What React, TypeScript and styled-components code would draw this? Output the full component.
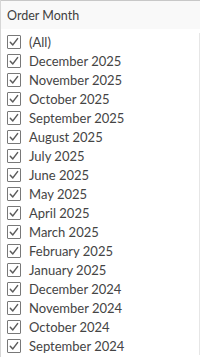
import React from "react";
import styled, { createGlobalStyle } from "styled-components";

const Global = createGlobalStyle`
  html, body { margin: 0; padding: 0; background: #fff; }
  body { font-family: Lato, "Open Sans", sans-serif; }
`;

const Panel = styled.div`
  width: 200px;
  height: 357px;
  box-sizing: border-box;
  border-left: 1px solid #d6d6d6;
  overflow: hidden;
  background: #fff;
`;

const Header = styled.div`
  height: 29px;
  box-sizing: border-box;
  border-top: 1px solid #c8c8c8;
  background: #f9f9f9;
  display: flex;
  align-items: center;
  padding-left: 6px;
  padding-top: 1px;
  font-size: 12.5px;
  color: #404040;
`;

const List = styled.div`
  display: flex;
  flex-direction: column;
  padding-top: 3px;
  border-right: 1px solid #e6e6e6;
  margin-top: 4px;
`;

const ListInner = styled.div`
  margin-top: -4px;
  display: flex;
  flex-direction: column;
`;

const Row = styled.label`
  height: 19px;
  display: flex;
  align-items: center;
  padding-left: 6px;
  gap: 8px;
  font-size: 13px;
  color: #444;
  white-space: nowrap;
`;

const Box = styled.span`
  width: 14px;
  height: 14px;
  box-sizing: border-box;
  border: 1px solid #787878;
  border-radius: 1px;
  background: #fff;
  display: flex;
  align-items: center;
  justify-content: center;
  flex: none;
`;

const items = [
  "(All)",
  "December 2025",
  "November 2025",
  "October 2025",
  "September 2025",
  "August 2025",
  "July 2025",
  "June 2025",
  "May 2025",
  "April 2025",
  "March 2025",
  "February 2025",
  "January 2025",
  "December 2024",
  "November 2024",
  "October 2024",
  "September 2024",
];

const Check = () => (
  <svg width="12" height="12" viewBox="0 0 12 12">
    <path d="M2.3 6.3 L4.8 8.9 L9.6 2.6" fill="none" stroke="#5a5a5a" strokeWidth="1.5" strokeLinecap="round" strokeLinejoin="round" />
  </svg>
);

export default function App() {
  return (
    <>
      <Global />
      <Panel>
        <Header>Order Month</Header>
        <List>
          <ListInner>
            {items.map((it) => (
              <Row key={it}>
                <Box>
                  <Check />
                </Box>
                {it}
              </Row>
            ))}
          </ListInner>
        </List>
      </Panel>
    </>
  );
}
